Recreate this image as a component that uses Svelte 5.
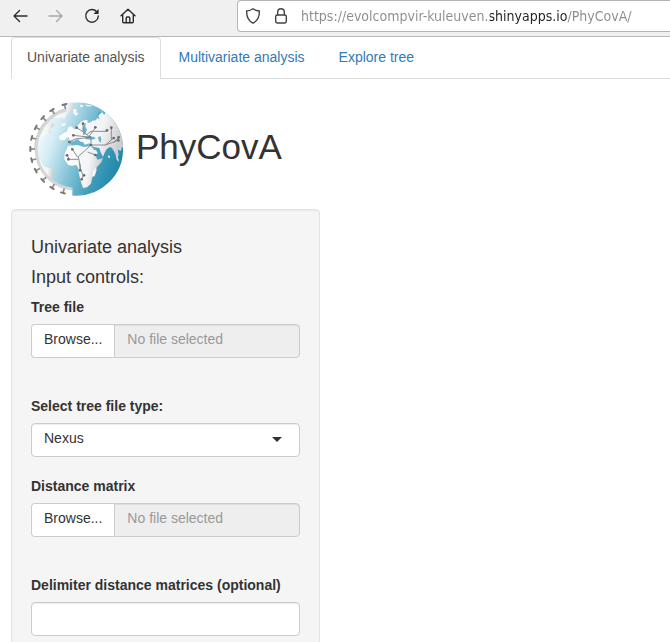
<script>
  const tabs = ['Univariate analysis', 'Multivariate analysis', 'Explore tree'];
  let active = $state(0);
  let fileType = $state('Nexus');
  let treeName = $state('');
  let matrixName = $state('');
  let delimiter = $state('');
  let address = $state('https://evolcompvir-kuleuven.shinyapps.io/PhyCovA/');

  // Spike angles around the left rim of the globe, in degrees
  const spikes = [105, 122, 137, 152, 166, 180, 194, 208, 223, 238, 253];
  const nodes = [
    [171, 98], [190, 86], [227, 97], [262, 106], [275, 98], [161, 121], [149, 141],
    [282, 129], [297, 127], [296, 136], [158, 163], [142, 181], [146, 193],
    [227, 180], [181, 226], [193, 241], [186, 253], [214, 150]
  ];
</script>

{#snippet filePicker(id, name, pick)}
  <div class="file-group">
    <label class="browse">
      Browse...
      <input {id} type="file" class="hidden-file" onchange={pick} />
    </label>
    <input class="control file-name" type="text" placeholder="No file selected" aria-label="Selected file" value={name} readonly />
  </div>
{/snippet}

<header class="browser-bar">
  <nav class="tools" aria-label="Browser">
    <button aria-label="Back"><svg viewBox="0 0 16 16"><path d="M15 8H2M7.5 2.500L2 8l5.500 5.500" /></svg></button>
    <button aria-label="Forward" disabled><svg viewBox="0 0 16 16"><path d="M1 8h13M8.500 2.500L14 8l-5.500 5.500" /></svg></button>
    <button aria-label="Reload"><svg viewBox="0 0 16 16"><path d="M13.200 4.300A6.300 6.300 0 1 0 14.300 8" /><path d="M14.600 1v5H9.500z" fill="currentColor" stroke="none" /></svg></button>
    <button aria-label="Home"><svg viewBox="0 0 16 16"><path d="M1 7.800L8 1.300l7 6.500M2.700 6.500v7.200q0 1 1 1h8.600q1 0 1-1V6.500M6.200 14.500V10q0-1 1-1h1.600q1 0 1 1v4.500" /></svg></button>
  </nav>
  <div class="address">
    <svg viewBox="0 0 16 16" aria-hidden="true"><path d="M8 .8c2 1.500 4.200 2 6.400 2.200C14.500 8.700 12.500 12.800 8 15.200 3.500 12.800 1.500 8.700 1.600 3 3.800 2.800 6 2.300 8 .8z" /></svg>
    <svg viewBox="0 0 16 16" aria-hidden="true"><rect x="2.700" y="7" width="10.600" height="8" rx="1.400" /><path d="M4.700 7V4a3.300 3.300 0 0 1 6.600 0v3" /></svg>
    <input type="text" aria-label="Address" bind:value={address} />
  </div>
</header>

<div class="page">
  <ul class="tabs">
    {#each tabs as tab, i}
      <li><a href="#tab-{i}" class:active={active === i} onclick={() => (active = i)}>{tab}</a></li>
    {/each}
  </ul>

  <div class="brand">
    <svg class="logo" viewBox="22 18 294 291" role="img" aria-label="PhyCovA logo">
      <defs>
        <linearGradient id="sea" x1="0" y1=".2" x2="1" y2=".55">
          <stop offset=".08" stop-color="#fff" />
          <stop offset=".3" stop-color="#d4edf5" />
          <stop offset=".55" stop-color="#83c2d7" />
          <stop offset=".8" stop-color="#3d9bba" />
          <stop offset="1" stop-color="#1f86a8" />
        </linearGradient>
        <linearGradient id="land" x1="0" y1="0" x2="1" y2=".2">
          <stop offset="0" stop-color="#fff" />
          <stop offset=".7" stop-color="#f3f4f5" />
          <stop offset="1" stop-color="#cbcdd0" />
        </linearGradient>
        <clipPath id="globe">
          <circle cx="170" cy="162" r="122" />
          <path d="M140 25.300A140 140 0 1 1 158 301.500V162H140z" />
        </clipPath>
      </defs>
      <g clip-path="url(#globe)">
        <rect x="22" y="18" width="294" height="291" fill="url(#sea)" />
        <g fill="url(#land)">
          <path d="M97 62l18-21 27-15 23-2-8 14 4 10-17 9-10 14-8-5-9 4-12-2z" />
          <path d="M45 115l22-26 18 3 12-10 8 9-14 13 5 9-19 7-10 13-22 12z" />
          <path d="M48 195l15 2 8 17 28 8 6 12-10 18 2 15-19-13-22-24z" />
          <path d="M125 87l11-4 6 4-5 6-11 1z" />
          <path d="M148 117l8-4 6 12-4 11-8 1-2-9z" />
          <path d="M166 104l5-9 13-15 13-6 9 3-5 5 9 2 8-7 11-1 3-7 8 4-5-12 10-12 9 11 9-20 12 6 43 39v65l-6 11-5-6-3 13-9-4 2 17-5 10-7-18-8-14-7-3-9 7-7 12-4 11-7-14-4-13-12-2-12-4 1 10 13 3 5 8-8 9-16 9-8-12-9-23-12-7-9-8 5-9-9-1-2 7-9-1-5-11-13 1-3 7-15 1-3-12 10-6 5-5 9-3 4-13 9-3z" />
          <path d="M145 153l21-3 20-3 3 7 14 3 10-1 7 3 6 18 7 17 17-5-5 13-15 16-3 19-9 10-4 19-12 11-12 2-7-21-5-21-2-17-6-10-12 2-12-2-12-17 1-17z" />
          <path d="M222 225l8-9 1 10-7 19-6-3z" />
          <path d="M161 42l11 2-4 8 9 3-8 8-8-9zM182 29l9 2-2 5-8-1zM198 29l22 2-8 4-13-2z" />
          <path d="M267 180l4 5-2 5-4-4zM290 182l6 8 3 12-8-8z" />
        </g>
        <g fill="#69b5ce">
          <path d="M189 101l5-14 5-4-2 12 5 9-5 14-8 3 2-9z" />
          <path d="M194 126l16-3 14 3 4 5-13 3-15-1z" />
          <path d="M235 126l8-2 2 10-3 11-5-9z" />
          <path d="M163 137l13-3 7 6 7 1 5 8 15-4 2 9-20 2-18-6-16 1-9-6z" />
        </g>
        <path d="M240 50q-9 9-7 20l4-9 10-10z" fill="#48a4c4" />
      </g>
      <path d="M140 45A121 121 0 0 0 158 282.400" fill="none" stroke="#d6d6d7" stroke-width="9" />
      <path d="M138 41A125 125 0 0 0 45 162" fill="none" stroke="#bebec0" stroke-width="2" />
      {#each spikes as angle}
        <g transform="rotate({-angle} 170 162)">
          <path d="M294 162h13" stroke="#8c8c8e" stroke-width="5" />
          <path d="M308 156v12" stroke="#77777a" stroke-width="6" stroke-linecap="round" />
        </g>
      {/each}
      <g fill="none" stroke="#77797c" stroke-width="2.500">
        <path d="M171 98l17 11 20 15 6 3v23l-17 16-21 18 7 39 8 20M190 86v25M208 124l20-27M214 109h48M202 118l12-9M161 121l53 6M149 141l17-9 48-5M214 150h43l39-14M257 150l25-21M275 98v36M282 143l15-16M158 163l16 24M142 181l8 12h26M204 171l23 9M181 226v-20M186 253l5-12" />
      </g>
      <g fill="#68696c">
        {#each nodes as [x, y]}<circle cx={x} cy={y} r="4" />{/each}
      </g>
    </svg>
    <h1>PhyCovA</h1>
  </div>

  <form class="well">
    <h4>Univariate analysis</h4>
    <h4>Input controls:</h4>

    <div class="group upload">
      <label for="tree-file">Tree file</label>
      {@render filePicker('tree-file', treeName, (e) => (treeName = e.target.files[0]?.name ?? ''))}
    </div>

    <div class="group">
      <label for="tree-type">Select tree file type:</label>
      <div class="select">
        <select id="tree-type" class="control" bind:value={fileType}>
          <option>Nexus</option>
          <option>Newick</option>
        </select>
      </div>
    </div>

    <div class="group upload">
      <label for="matrix-file">Distance matrix</label>
      {@render filePicker('matrix-file', matrixName, (e) => (matrixName = e.target.files[0]?.name ?? ''))}
    </div>

    <div class="group">
      <label for="delimiter">Delimiter distance matrices (optional)</label>
      <input id="delimiter" class="control" type="text" bind:value={delimiter} />
    </div>
  </form>
</div>

<style>
  :global(html) { overflow: hidden; height: 100%; }
  :global(body) {
    margin: 0;
    height: 100%;
    overflow: hidden;
    background: #fff;
    color: #333;
    font: 14px/20px "Liberation Sans", Arial, sans-serif;
  }
  * { box-sizing: border-box; }

  .browser-bar {
    display: flex;
    height: 37px;
    background: #f0f0f1;
    border-bottom: 1px solid #b8b8b8;
  }
  .tools {
    display: flex;
    flex: none;
    align-items: center;
    gap: 20px;
    width: 237px;
    padding: 0 0 4px 12px;
  }
  .tools button {
    display: flex;
    padding: 0;
    border: 0;
    background: none;
    color: #2b2b2b;
  }
  .tools button:disabled { color: #a8a8a8; }
  .browser-bar svg {
    flex: none;
    width: 16px;
    height: 16px;
    fill: none;
    stroke: currentColor;
    stroke-width: 1.4;
    stroke-linecap: round;
    stroke-linejoin: round;
  }
  .address {
    display: flex;
    flex: 1;
    align-items: center;
    gap: 12px;
    height: 32px;
    padding-left: 7px;
    border: 1px solid #b4b4b4;
    border-right: 0;
    border-radius: 4px 0 0 4px;
    background: #fff;
    color: #444;
  }
  .address input {
    flex: 1;
    min-width: 0;
    height: 24px;
    padding: 0;
    border: 0;
    outline: 0;
    background: linear-gradient(to right, #8c8c8c 189px, #222 189px, #222 266px, #8c8c8c 266px);
    background-clip: text;
    color: transparent;
    caret-color: #222;
    font: 14px/24px "DejaVu Sans Condensed", "Noto Sans", sans-serif;
  }

  .page { padding: 0 0 0 11px; }
  .tabs {
    display: flex;
    gap: 2px;
    margin: 0;
    padding: 0;
    list-style: none;
    border-bottom: 1px solid #ddd;
  }
  .tabs li { margin-bottom: -1px; }
  .tabs a {
    display: block;
    padding: 9px 15px 11px;
    border: 1px solid transparent;
    border-radius: 4px 4px 0 0;
    color: #337ab7;
    text-decoration: none;
  }
  .tabs a.active {
    border-color: #ddd #ddd #fff;
    background: #fff;
    color: #555;
  }

  .brand {
    display: flex;
    align-items: center;
    gap: 11px;
    padding: 22px 0 11px 16px;
  }
  .logo { flex: none; width: 98px; height: 97px; }
  h1 { margin: 0; padding-bottom: 5px; font-size: 35px; font-weight: 400; line-height: 40px; }

  .well {
    max-width: 309px;
    padding: 17px 19px 19px;
    border: 1px solid #e3e3e3;
    border-radius: 4px;
    background: #f5f5f5;
    box-shadow: inset 0 1px 1px rgba(0, 0, 0, 0.05);
  }
  h4 { margin: 10px 0; font-size: 18px; font-weight: 400; line-height: 20px; }
  .group { display: flex; flex-direction: column; gap: 7px; margin-bottom: 19px; }
  .upload { margin-bottom: 38px; }
  .group > label { font-weight: 700; line-height: 20px; }
  .control {
    width: 100%;
    height: 34px;
    padding: 4px 12px 8px;
    border: 1px solid #ccc;
    border-radius: 4px;
    background: #fff;
    color: #333;
    font: inherit;
    box-shadow: inset 0 1px 1px rgba(0, 0, 0, 0.075);
  }
  .file-group { display: flex; }
  .browse {
    position: relative;
    flex: none;
    height: 34px;
    padding: 4px 12px 8px;
    border: 1px solid #ccc;
    border-right: 0;
    border-radius: 4px 0 0 4px;
    background: #fff;
    overflow: hidden;
  }
  .hidden-file { position: absolute; inset: 0; width: 100%; opacity: 0; }
  .file-name {
    flex: 1;
    min-width: 0;
    border-radius: 0 4px 4px 0;
    background: #eee;
  }
  .file-name::placeholder { color: #999; opacity: 1; }
  .select { position: relative; }
  .select::after {
    content: "";
    position: absolute;
    top: 14px;
    right: 18px;
    border: 5px solid transparent;
    border-top-color: #333;
    border-bottom: 0;
    pointer-events: none;
  }
  select { appearance: none; box-shadow: none; }
</style>
